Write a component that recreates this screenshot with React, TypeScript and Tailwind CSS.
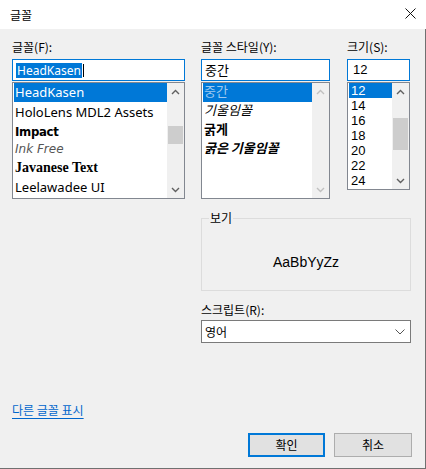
import React from "react";

const ui = "font-['Noto_Sans_CJK_KR',sans-serif]";
const latin = "font-['Noto_Sans','Noto_Sans_CJK_KR',sans-serif]";
const digits = "font-['Liberation_Sans',sans-serif]";

const Chevron = ({ dir, color }: { dir: "up" | "down"; color: string }) => (
  <svg width="9" height="6" viewBox="0 0 9 6">
    <polyline
      points={dir === "up" ? "1,5 4.5,1.5 8,5" : "1,1 4.5,4.5 8,1"}
      fill="none"
      stroke={color}
      strokeWidth="1.4"
    />
  </svg>
);

interface ScrollProps {
  thumbTop?: number;
  thumbHeight?: number;
  disabled?: boolean;
}

const ScrollBar = ({ thumbTop, thumbHeight, disabled }: ScrollProps) => {
  const color = disabled ? "#c0c0c0" : "#606060";
  return (
    <div className="flex w-[17px] flex-col bg-[#f0f0f0]">
      <div className="flex h-[17px] items-center justify-center">
        <Chevron dir="up" color={color} />
      </div>
      <div className="flex-1">
        {thumbHeight ? (
          <div
            className="mx-auto w-[15px] bg-[#cdcdcd]"
            style={{ marginTop: thumbTop, height: thumbHeight }}
          />
        ) : null}
      </div>
      <div className="flex h-[17px] items-center justify-center">
        <Chevron dir="down" color={color} />
      </div>
    </div>
  );
};

const fonts = [
  { name: "HeadKasen", h: "h-[19px]", cls: `${latin} text-[13px]` },
  { name: "HoloLens MDL2 Assets", h: "h-[21px]", cls: `${latin} text-[13px]` },
  {
    name: "Impact",
    h: "h-[17px]",
    cls: "font-['DejaVu_Sans_Condensed','DejaVu_Sans',sans-serif] font-black text-[13px] tracking-[-0.3px]",
  },
  {
    name: "Ink Free",
    h: "h-[18px]",
    cls: "font-['DejaVu_Sans',sans-serif] font-extralight italic text-[12px] text-[#555]",
  },
  {
    name: "Javanese Text",
    h: "h-[19px]",
    cls: "font-['Liberation_Serif',serif] text-[14px] font-semibold",
  },
  { name: "Leelawadee UI", h: "h-[21px]", cls: `${latin} text-[13px]` },
];

const styles = [
  { name: "중간", cls: "" },
  { name: "기울임꼴", cls: "italic text-[#333]" },
  { name: "굵게", cls: "font-bold" },
  { name: "굵은 기울임꼴", cls: "font-bold italic" },
];

const sizes = ["12", "14", "16", "18", "20", "22", "24"];

const Label = ({ children }: { children: React.ReactNode }) => (
  <div className={`${ui} h-[16px] text-[12px] leading-[16px] text-black`}>
    {children}
  </div>
);

export default function App() {
  return (
    <div className="flex h-[469px] w-[426px] flex-col bg-white">
      {/* title bar */}
      <div className="flex h-[29px] shrink-0 items-center justify-between bg-white pl-[10px] pr-[10px]">
        <span className={`${ui} text-[12px] leading-[16px] text-black`}>글꼴</span>
        <svg width="11" height="11" viewBox="0 0 11 11" className="mb-[3px]">
          <path d="M0.5 0.5 L10.5 10.5 M10.5 0.5 L0.5 10.5" stroke="#111" strokeWidth="1" />
        </svg>
      </div>

      <div className="flex flex-1 flex-col border-b border-r border-[#707070] bg-[#f0f0f0] pl-[12px] pt-[10px]">
        <div className="flex">
          {/* font family */}
          <div className="flex w-[173px] flex-col">
            <Label>글꼴(F):</Label>
            <div className="mt-[4px] flex h-[22px] items-center border border-[#0078d7] bg-white pl-[3px]">
              <span className={`${latin} bg-[#0078d7] px-[1px] text-[12px] leading-[15px] text-white`}>
                HeadKasen
              </span>
              <span className="ml-[1px] h-[13px] w-[1px] bg-black" />
            </div>
            <div className="mt-[1px] flex h-[117px] border border-[#828790] bg-white">
              <div className="flex flex-1 flex-col pl-[1px]">
                {fonts.map((f, i) => (
                  <div
                    key={f.name}
                    className={`flex ${f.h} items-center whitespace-nowrap pl-[1px] ${
                      i === 0 ? "bg-[#0078d7] text-white" : "text-black"
                    }`}
                  >
                    <span className={`${f.cls} leading-none ${i === 0 ? "text-white" : ""}`}>
                      {f.name}
                    </span>
                  </div>
                ))}
              </div>
              <ScrollBar thumbTop={26} thumbHeight={18} />
            </div>
          </div>

          {/* font style */}
          <div className="ml-[16px] flex w-[129px] flex-col">
            <Label>글꼴 스타일(Y):</Label>
            <div className={`${ui} mt-[4px] flex h-[22px] items-center border border-[#0078d7] bg-white pl-[3px] text-[13px] leading-[16px]`}>
              중간
            </div>
            <div className="mt-[1px] flex h-[117px] border border-[#828790] bg-white">
              <div className="flex flex-1 flex-col pl-[1px]">
                {styles.map((s, i) => (
                  <div
                    key={s.name}
                    className={`${ui} flex h-[19px] items-center pb-[3px] pl-[1px] text-[13px] leading-[16px] ${s.cls} ${
                      i === 0 ? "bg-[#0078d7] text-[#9fc9ef]" : "text-black"
                    }`}
                  >
                    {s.name}
                  </div>
                ))}
              </div>
              <ScrollBar disabled />
            </div>
          </div>

          {/* size */}
          <div className="ml-[17px] flex w-[63px] flex-col">
            <Label>크기(S):</Label>
            <div className={`${digits} mt-[4px] flex h-[22px] items-center border border-[#0078d7] bg-white pl-[5px] text-[13px] leading-[16px]`}>
              12
            </div>
            <div className="mt-[1px] flex h-[108px] border border-[#828790] bg-white">
              <div className="flex flex-1 flex-col overflow-hidden pl-[1px]">
                {sizes.map((s, i) => (
                  <div
                    key={s}
                    className={`${digits} flex h-[15px] shrink-0 items-center pl-[2px] text-[13px] leading-[15px] ${
                      i === 0 ? "bg-[#0078d7] text-white" : "text-black"
                    }`}
                  >
                    {s}
                  </div>
                ))}
              </div>
              <ScrollBar thumbTop={18} thumbHeight={32} />
            </div>
          </div>
        </div>

        {/* sample and script */}
        <div className="ml-[189px] flex w-[210px] flex-col">
          <div className="relative mt-[19px] flex h-[73px] items-center justify-center border border-[#dcdcdc] pt-[14px]">
            <span className={`${ui} absolute -top-[9px] left-[7px] bg-[#f0f0f0] px-[1px] text-[12px] leading-[16px]`}>
              보기
            </span>
            <span className="font-['Liberation_Sans',sans-serif] text-[14px] leading-none text-black">
              AaBbYyZz
            </span>
          </div>
          <div className="mt-[11px]">
            <Label>스크립트(R):</Label>
          </div>
          <div className="mt-[2px] flex h-[23px] items-center justify-between border border-[#7a7a7a] bg-white pl-[3px] pr-[5px]">
            <span className={`${ui} text-[12px] leading-[16px]`}>영어</span>
            <svg width="10" height="6" viewBox="0 0 10 6">
              <polyline points="0.5,0.5 5,5 9.5,0.5" fill="none" stroke="#555" strokeWidth="1" />
            </svg>
          </div>
        </div>

        {/* more fonts link and buttons */}
        <div className="mt-auto flex flex-col pb-[11px] pr-[13px]">
          <a
            href="#"
            className={`${ui} w-fit text-[12px] leading-[16px] text-[#0066cc] underline decoration-[#0066cc] underline-offset-[3px]`}
          >
            다른 글꼴 표시
          </a>
          <div className="mt-[15px] flex justify-end gap-[9px]">
            <button
              className={`${ui} h-[24px] w-[77px] border-2 border-[#0078d7] bg-[#e1e1e1] text-[12px] leading-[16px] text-black`}
            >
              확인
            </button>
            <button
              className={`${ui} h-[24px] w-[78px] border border-[#adadad] bg-[#e1e1e1] text-[12px] leading-[16px] text-black`}
            >
              취소
            </button>
          </div>
        </div>
      </div>
    </div>
  );
}
